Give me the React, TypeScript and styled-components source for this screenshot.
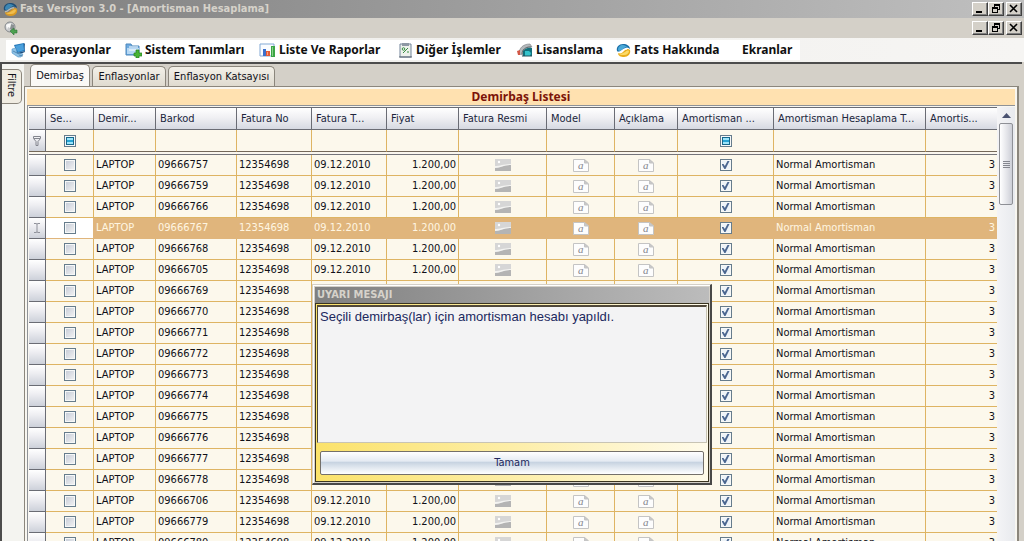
import React from "react";
import styled, { createGlobalStyle, css } from "styled-components";

const GlobalStyle = createGlobalStyle`
  *, *::before, *::after { box-sizing: border-box; }
  html, body { margin: 0; }
  body, button, input, table, textarea {
    font-family: "DejaVu Sans Condensed", "Noto Sans", sans-serif;
    font-size: 11px;
    line-height: 14px;
  }
  body { background: #d4d0c8; color: #101018; overflow: hidden; }
`;

const bold = css`
  font-family: "Noto Sans", "DejaVu Sans Condensed", sans-serif;
  font-weight: 700;
`;

const caption = css`
  font-family: "DejaVu Sans Condensed", "Noto Sans", sans-serif;
  font-size: 11px;
  font-weight: 700;
  color: #d6d2ca;
  white-space: nowrap;
`;

const Window = styled.div`
  display: flex;
  flex-direction: column;
  height: 100vh;
  overflow: hidden;
`;

const TitleBar = styled.header`
  display: flex;
  align-items: center;
  gap: 2px;
  height: 18px;
  padding: 0 2px 0 3px;
  background: linear-gradient(90deg, #7f7f7f, #c0c0c0);
`;

const Title = styled.h1`
  ${caption}
  flex: 1;
  margin: 0;
  line-height: 18px;
`;

const DocumentBar = styled.div`
  display: flex;
  align-items: center;
  justify-content: space-between;
  height: 20px;
  padding: 0 2px 0 4px;
  background: #d4d0c8;
`;

const Buttons = styled.div`
  display: flex;
`;

const WindowButton = styled.button<{ $apart?: boolean }>`
  display: flex;
  align-items: center;
  justify-content: center;
  width: 16px;
  height: 14px;
  margin-left: ${(p) => (p.$apart ? 2 : 0)}px;
  padding: 0;
  border: 1px solid;
  border-color: #ffffff #404040 #404040 #ffffff;
  background: #d4d0c8;
  box-shadow: inset -1px -1px 0 #808080;
`;

const MenuStrip = styled.nav`
  display: flex;
  align-items: center;
  height: 24px;
  padding-left: 6px;
  background: linear-gradient(90deg, #eeedea, #f6f5f3);
`;

const Menu = styled.ul`
  display: grid;
  grid-template-columns: 114px 134px 139px 119px 99px 126px auto;
  align-items: center;
  height: 20px;
  margin: 0;
  padding: 0 8px 0 5px;
  list-style: none;
  background: #ffffff;
`;

const MenuButton = styled.button`
  ${bold}
  display: flex;
  align-items: center;
  gap: 3px;
  padding: 0;
  border: 0;
  background: none;
  color: #101010;
  font-size: 12px;
  line-height: 20px;
  white-space: nowrap;
`;

const Workspace = styled.div`
  display: flex;
  flex: 1;
  min-height: 0;
  margin-right: 2px;
  border-top: 2px solid #4c4c4c;
  border-left: 2px solid #4c4c4c;
`;

const SideBar = styled.aside`
  width: 22px;
  padding-top: 5px;
  background: #f4f4f0;
`;

const SideTab = styled.button`
  display: flex;
  align-items: center;
  width: 20px;
  height: 35px;
  padding: 3px 4px 0 2px;
  border: 1px solid #8b867c;
  border-left: 0;
  border-radius: 0 5px 5px 0;
  background: #f0ece2;
  color: #101018;
  writing-mode: vertical-rl;
`;

const Main = styled.main`
  display: flex;
  flex: 1;
  flex-direction: column;
  min-width: 0;
  padding-right: 3px;
`;

const TabList = styled.div`
  display: flex;
  align-items: flex-end;
  gap: 2px;
  height: 22px;
  padding-left: 6px;
`;

const Tab = styled.button<{ $active?: boolean; $width: number }>`
  width: ${(p) => p.$width}px;
  height: ${(p) => (p.$active ? 22 : 20)}px;
  padding: 0;
  border: 1px solid #8b867c;
  border-bottom: 0;
  border-radius: 5px 5px 0 0;
  background: ${(p) => (p.$active ? "#faf9f6" : "linear-gradient(#f3f0e8, #dfdbd0)")};
  color: #101018;
  white-space: nowrap;
`;

const Panel = styled.section`
  display: flex;
  flex: 1;
  flex-direction: column;
  min-height: 0;
  padding: 2px 2px 0 2px;
  border: solid #8b867c;
  border-width: 1px 2px 0 1px;
  background: #f8f6f0;
`;

const ListTitle = styled.h2`
  ${bold}
  margin: 0;
  background: #ffe1b0;
  color: #7c1408;
  font-size: 12px;
  line-height: 16px;
  text-align: center;
`;

const GridFrame = styled.div`
  display: flex;
  flex: 1;
  min-height: 0;
  padding: 1px 0 0 1px;
  border: solid #8e9298;
  border-width: 1px 0 0 1px;
`;

const GridBody = styled.div`
  flex: 1;
  min-width: 0;
  overflow: hidden;
`;

const Table = styled.table`
  width: 100%;
  table-layout: fixed;
  border-spacing: 0;
  background: #fcf8ec;
`;

const HeadCell = styled.th`
  height: 23px;
  padding: 0 4px;
  border: solid #6a6c74;
  border-width: 1px 1px 1px 0;
  background: linear-gradient(#ffffff, #f0f0f3 45%, #d6d9e2);
  color: #20263c;
  font-weight: 400;
  text-align: left;
  text-overflow: ellipsis;
  white-space: nowrap;
  overflow: hidden;
`;

const RowHead = styled.td`
  height: 21px;
  padding: 0;
  border: solid #6a6c74;
  border-width: 0 1px 1px 0;
  background: linear-gradient(#ffffff, #eeeef2 40%, #cdd1da);
  text-align: center;
  line-height: 0;
`;

const Cell = styled.td<{ $align?: "left" | "center" | "right"; $plain?: boolean }>`
  height: 21px;
  padding: 0 2px;
  border: solid #deb463;
  border-width: 0 1px 1px 0;
  text-align: ${(p) => p.$align ?? "left"};
  line-height: 16px;
  white-space: nowrap;
  overflow: hidden;
  ${(p) => p.$plain && css`background: #ffffff;`}
`;

const FilterRow = styled.tr`
  ${Cell}, ${RowHead} { height: 22px; border-bottom-color: #74685a; }
`;

const Divider = styled.td`
  height: 3px;
  padding: 0;
  border: solid #74747a;
  border-width: 0 1px 1px 0;
  background: #faf6ee;
`;

const Row = styled.tr<{ $selected?: boolean }>`
  ${(p) =>
    p.$selected &&
    css`
      background: #e0b57c;
      color: #fff6e2;
      ${Cell} { border-color: #e0b57c; }
    `}
`;

const CheckBox = styled.input`
  appearance: none;
  display: block;
  position: relative;
  width: 12px;
  height: 12px;
  margin: 0 auto;
  border: 1px solid #667c8c;
  background: linear-gradient(135deg, #c4cad6, #f4f4f4);
  box-shadow: inset 0 0 0 1px #f6f8f8;
  &:checked { background: #edf3f8; }
  &:checked::after {
    content: "";
    position: absolute;
    inset: 1px;
    background: #4a6690;
    clip-path: polygon(0 38%, 25% 38%, 42% 62%, 75% 0, 100% 0, 50% 100%, 36% 100%);
  }
`;

const MixedBox = styled(CheckBox)`
  background: #ffffff;
  &::after {
    content: "";
    position: absolute;
    inset: 1px;
    border: 1px solid #17688c;
    background: linear-gradient(#9be4fa 0 33%, #28a4d4 33% 66%, #9be4fa 66%);
  }
`;

const ScrollBar = styled.div`
  display: flex;
  flex-direction: column;
  align-items: center;
  width: 18px;
  background: linear-gradient(90deg, #f4f4f6, #e8eaee);
`;

const ScrollArrow = styled.button`
  display: flex;
  align-items: center;
  justify-content: center;
  width: 16px;
  height: 16px;
  padding: 0;
  border: 0;
  background: none;
`;

const ScrollThumb = styled.div`
  display: flex;
  align-items: center;
  justify-content: center;
  width: 14px;
  height: 82px;
  border: 1px solid #8e9096;
  border-radius: 2px;
  background: linear-gradient(90deg, #ffffff, #e2e3e8 60%, #ccced6);
`;

const Dialog = styled.div`
  position: absolute;
  top: 284px;
  left: calc(50% - 200px);
  width: 400px;
  padding: 1px;
  border: solid;
  border-width: 1px 2px 2px 1px;
  border-color: #d4d0c8 #484848 #484848 #d4d0c8;
  background: #d4d0c8;
  box-shadow: inset 1px 1px 0 #ffffff;
`;

const DialogTitle = styled.h2`
  ${caption}
  margin: 1px 0 0 1px;
  padding: 0 2px;
  background: linear-gradient(90deg, #808080, #bcbcbc);
  line-height: 16px;
`;

const DialogBody = styled.div`
  padding: 1px;
  margin-left: 1px;
  border: 1px solid #3a3420;
  background: linear-gradient(90deg, #fbe26a, #fdeea8 50%, #fffbea);
`;

const Message = styled.textarea`
  display: block;
  width: 100%;
  height: 138px;
  padding: 2px 2px;
  border: solid;
  border-width: 2px 1px 1px 1px;
  border-color: #50483a #c8c4b4 #c8c4b4 #50483a;
  background: #f3f3f4;
  color: #20285e;
  font-family: "Liberation Sans", Arial, sans-serif;
  font-size: 13px;
  line-height: 16px;
  resize: none;
  outline: 0;
`;

const OkButton = styled.button`
  display: block;
  width: calc(100% - 6px);
  height: 24px;
  margin: 8px 3px 5px;
  padding: 0;
  border: 1px solid #74706a;
  border-radius: 2px;
  background: linear-gradient(#ffffff, #e4eaf2 42%, #c6d2e0 46%, #dbe3ec 65%, #ffffff);
  color: #20285e;
`;

const Swirl = ({ title = false }: { title?: boolean }) => (
  <svg width="15" height="15" viewBox="0 0 15 15" aria-hidden="true">
    <path d="M1 8C0 4 3 1 7 1c4 0 7 2 7 5-2-2-4-2-6 0S3 10 1 8Z" fill={title ? "#1d4e78" : "#1a6fa8"} />
    <path d="M2 7c0-3 2-5 5-5 2 0 3 1 4 2-2 0-3 1-4 2C5 8 3 9 2 7Z" fill={title ? "#3d87b4" : "#4aa9d8"} />
    <path d="M14 7c1 4-2 7-6 7-3 0-6-1-6-4 3 1 4 0 6-2s4-3 6-1Z" fill={title ? "#d99a25" : "#eaae1c"} />
    <path d="M3 11c2 0 4-1 6-2 1-1 3-2 4-1 0 2-2 4-5 4-2 0-4 0-5-1Z" fill={title ? "#f0bd4e" : "#fbdb6a"} />
    <path d="M2 9.500C6 10 6 5 11 6" fill="none" stroke={title ? "#b9bdb8" : "#ffffff"} strokeWidth="1.300" />
  </svg>
);

const GlobeIcon = () => (
  <svg width="15" height="15" viewBox="0 0 15 15" aria-hidden="true">
    <circle cx="6" cy="6" r="5" fill="#c8cacc" stroke="#85898c" />
    <path d="M2 4c2-2 3 0 4-2l3 2-3 3-2-1-1 3Z" fill="#f8f8f8" />
    <path d="M7 3l3 1v3L8 9 6 8Z" fill="#8a9092" />
    <path d="M6 10l4-3v2h3v3h-3v2Z" fill="#4ea251" stroke="#2d7437" strokeWidth=".6" />
  </svg>
);

const ComputerIcon = () => (
  <svg width="16" height="16" viewBox="0 0 16 16" aria-hidden="true">
    <path d="M3 3l10-2 1 8-8 2Z" fill="#2477b8" />
    <path d="M4 4l8-2 1 6-6 2Z" fill="#4ba0dc" />
    <path d="M13 1l1 1v8l-5 2-3-1 8-2Z" fill="#1a4a7a" />
    <path d="M1 7l4-1 1 5 6 1-2 3-3 0-6-4Z" fill="#8fc2e6" stroke="#4a8fc2" strokeWidth=".6" />
    <path d="M2 9l6 3M8 13l4 1" stroke="#39739f" strokeWidth=".7" />
  </svg>
);

const FolderAddIcon = () => (
  <svg width="17" height="16" viewBox="0 0 17 16" aria-hidden="true">
    <path d="M1 2h5l1 2h7v9H1Z" fill="#6fabe0" stroke="#4d88bd" />
    <path d="M2 6h12v6H2Z" fill="#b7d9f5" />
    <path d="M4 5h9M4 8h9" stroke="#fff" />
    <path d="M11 8h3v3h3v3h-3v2h-3v-2H9v-3h2Z" fill="#49b436" stroke="#25811f" strokeWidth=".7" />
  </svg>
);

const ChartIcon = () => (
  <svg width="17" height="16" viewBox="0 0 17 16" aria-hidden="true">
    <path d="M1 2h14v12H1Z" fill="#fafcff" stroke="#82a9d5" />
    <path d="M4 7h3v7H4Z" fill="#3a6fcc" />
    <path d="M7 9h4v5H7Z" fill="#e45a35" />
    <path d="M12 4h4v11h-4Z" fill="#3ca546" />
    <path d="M13 5h1v9h-1Z" fill="#88d18a" />
    <path d="M8 10h1v3H8Z" fill="#f6a184" />
  </svg>
);

const ClipboardIcon = () => (
  <svg width="15" height="16" viewBox="0 0 15 16" aria-hidden="true">
    <path d="M2 2h11v13H2Z" fill="#eef2ec" stroke="#73859a" />
    <path d="M4 1h7v3H4Z" fill="#8e98a4" />
    <path d="M1 15h13" stroke="#5c6674" />
    <circle cx="5.500" cy="7" r="1.300" fill="none" stroke="#3a8f45" />
    <path d="M5 11l5-5M9 10h2" stroke="#3a8f45" />
  </svg>
);

const LicenseIcon = () => (
  <svg width="16" height="15" viewBox="0 0 16 15" aria-hidden="true">
    <path d="M2 11C2 5 6 1 13 1l2 3C9 3 6 6 6 12Z" fill="#b4b8bb" stroke="#767b80" strokeWidth=".6" />
    <path d="M5 11C5 7 8 4 14 4" fill="none" stroke="#5d6468" />
    <path d="M6 8c2-3 6-4 9-3v8H6Z" fill="#12707c" />
    <path d="M8 8h4l2 2-1 3H8Z" fill="#35c4cc" />
    <path d="M0 8l3-1v5H1Z" fill="#d25746" />
    <path d="M5 13h10" stroke="#24535c" />
  </svg>
);

const PictureIcon = () => (
  <svg width="16" height="12" viewBox="0 0 16 12" style={{ display: "block", margin: "0 auto" }} aria-hidden="true">
    <path d="M0 0h16v12H0Z" fill="#d6d6d6" />
    <path d="M0 9c5 0 8-3 16-3v6H0Z" fill="#b4b4b4" />
    <path d="M0 7c5 0 9-2 16-2v1C9 6 6 9 0 9Z" fill="#f3f3f1" />
    <circle cx="4" cy="3" r="1.200" fill="#fff" />
  </svg>
);

const NoteIcon = () => (
  <svg width="16" height="13" viewBox="0 0 16 13" style={{ display: "block", margin: "0 auto" }} aria-hidden="true">
    <path d="M.5.500h11l4 3.500v8.500H.5Z" fill="#fdfdfd" stroke="#c4c4c4" />
    <path d="M11.500.500v3.500h4Z" fill="#c8c8c8" stroke="#c4c4c4" />
    <text x="5" y="10" fontFamily="Liberation Serif, serif" fontStyle="italic" fontSize="11" fill="#84848c">a</text>
  </svg>
);

const FunnelIcon = () => (
  <svg width="8" height="10" viewBox="0 0 8 10" aria-hidden="true">
    <path d="M.5.500h7v2L5 5.500v4H3v-4L.5 2.500ZM1 2.500h6" fill="none" stroke="#83858e" />
  </svg>
);

const CaretIcon = () => (
  <svg width="6" height="10" viewBox="0 0 6 10" aria-hidden="true">
    <path d="M0 .5h2l1 .5 1-.5h2M0 9.500h2L3 9l1 .5h2M3 1v8" fill="none" stroke="#8f919a" />
  </svg>
);

const WindowControls = () => (
  <Buttons>
    <WindowButton aria-label="Minimize">
      <svg width="12" height="10" viewBox="0 0 12 10" shapeRendering="crispEdges"><path d="M2 7h6v2H2Z" /></svg>
    </WindowButton>
    <WindowButton aria-label="Restore">
      <svg width="12" height="10" viewBox="0 0 12 10" shapeRendering="crispEdges">
        <path d="M4 0h6v6H8V5h1V2H5v1H4ZM2 3h6v6H2Zm1 2v3h4V5Z" fillRule="evenodd" />
      </svg>
    </WindowButton>
    <WindowButton aria-label="Close" $apart>
      <svg width="12" height="10" viewBox="0 0 12 10"><path d="M2 1l7 7M9 1L2 8" stroke="#000" strokeWidth="1.600" /></svg>
    </WindowButton>
  </Buttons>
);

const menuItems: { label: string; icon?: React.ReactNode }[] = [
  { label: "Operasyonlar", icon: <ComputerIcon /> },
  { label: "Sistem Tanımları", icon: <FolderAddIcon /> },
  { label: "Liste Ve Raporlar", icon: <ChartIcon /> },
  { label: "Diğer İşlemler", icon: <ClipboardIcon /> },
  { label: "Lisanslama", icon: <LicenseIcon /> },
  { label: "Fats Hakkında", icon: <Swirl /> },
  { label: "Ekranlar" },
];

const columns = [
  { label: "", width: 17 },
  { label: "Se...", width: 48 },
  { label: "Demir...", width: 62 },
  { label: "Barkod", width: 81 },
  { label: "Fatura No", width: 75 },
  { label: "Fatura T...", width: 75 },
  { label: "Fiyat", width: 72 },
  { label: "Fatura Resmi", width: 88 },
  { label: "Model", width: 68 },
  { label: "Açıklama", width: 63 },
  { label: "Amortisman ...", width: 96 },
  { label: "Amortisman Hesaplama T...", width: 152 },
  { label: "Amortis...", width: 72 },
];

const Column = styled.col<{ $width: number }>`
  width: ${(p) => p.$width}px;
`;

const barcodes = [
  "09666757", "09666759", "09666766", "09666767", "09666768", "09666705", "09666769",
  "09666770", "09666771", "09666772", "09666773", "09666774", "09666775", "09666776",
  "09666777", "09666778", "09666706", "09666779", "09666780",
];
const selectedBarcode = "09666767";

export default function App() {
  return (
    <Window>
      <GlobalStyle />
      <TitleBar>
        <Swirl title />
        <Title>Fats Versiyon 3.0 - [Amortisman Hesaplama]</Title>
        <WindowControls />
      </TitleBar>
      <DocumentBar>
        <GlobeIcon />
        <WindowControls />
      </DocumentBar>
      <MenuStrip>
        <Menu>
          {menuItems.map((item) => (
            <li key={item.label}>
              <MenuButton>{item.icon}{item.label}</MenuButton>
            </li>
          ))}
        </Menu>
      </MenuStrip>
      <Workspace>
        <SideBar><SideTab>Filtre</SideTab></SideBar>
        <Main>
          <TabList role="tablist">
            <Tab role="tab" aria-selected $active $width={60}>Demirbaş</Tab>
            <Tab role="tab" $width={74}>Enflasyonlar</Tab>
            <Tab role="tab" $width={107}>Enflasyon Katsayısı</Tab>
          </TabList>
          <Panel>
            <ListTitle>Demirbaş Listesi</ListTitle>
            <GridFrame>
              <GridBody>
                <Table>
                  <colgroup>
                    {columns.map((c) => <Column key={c.label} $width={c.width} />)}
                  </colgroup>
                  <thead>
                    <tr>{columns.map((c) => <HeadCell key={c.label} scope="col">{c.label}</HeadCell>)}</tr>
                  </thead>
                  <tbody>
                    <FilterRow>
                      <RowHead><FunnelIcon /></RowHead>
                      {columns.slice(1).map((c, i) => (
                        <Cell key={c.label}>
                          {(i === 0 || i === 9) && <MixedBox type="checkbox" aria-label={c.label} />}
                        </Cell>
                      ))}
                    </FilterRow>
                    <tr><Divider colSpan={columns.length} /></tr>
                    {barcodes.map((code) => {
                      const selected = code === selectedBarcode;
                      return (
                        <Row key={code} $selected={selected}>
                          <RowHead>{selected && <CaretIcon />}</RowHead>
                          <Cell $plain={selected}><CheckBox type="checkbox" aria-label={code} /></Cell>
                          <Cell>LAPTOP</Cell>
                          <Cell>{code}</Cell>
                          <Cell>12354698</Cell>
                          <Cell>09.12.2010</Cell>
                          <Cell $align="right">1.200,00</Cell>
                          <Cell><PictureIcon /></Cell>
                          <Cell><NoteIcon /></Cell>
                          <Cell><NoteIcon /></Cell>
                          <Cell><CheckBox type="checkbox" defaultChecked aria-label="Amortisman" /></Cell>
                          <Cell>Normal Amortisman</Cell>
                          <Cell $align="right">3</Cell>
                        </Row>
                      );
                    })}
                  </tbody>
                </Table>
              </GridBody>
              <ScrollBar>
                <ScrollArrow aria-label="Scroll up">
                  <svg width="9" height="5" viewBox="0 0 9 5"><path d="M0 5l4.500-5L9 5Z" fill="#4a5270" /></svg>
                </ScrollArrow>
                <ScrollThumb>
                  <svg width="7" height="7" viewBox="0 0 7 7"><path d="M0 .5h7M0 2.500h7M0 4.500h7M0 6.500h7" stroke="#85878f" /></svg>
                </ScrollThumb>
              </ScrollBar>
            </GridFrame>
          </Panel>
        </Main>
      </Workspace>
      <Dialog role="dialog" aria-labelledby="dialog-title">
        <DialogTitle id="dialog-title">UYARI MESAJI</DialogTitle>
        <DialogBody>
          <Message readOnly aria-labelledby="dialog-title" defaultValue="Seçili demirbaş(lar) için amortisman hesabı yapıldı." />
          <OkButton>Tamam</OkButton>
        </DialogBody>
      </Dialog>
    </Window>
  );
}
